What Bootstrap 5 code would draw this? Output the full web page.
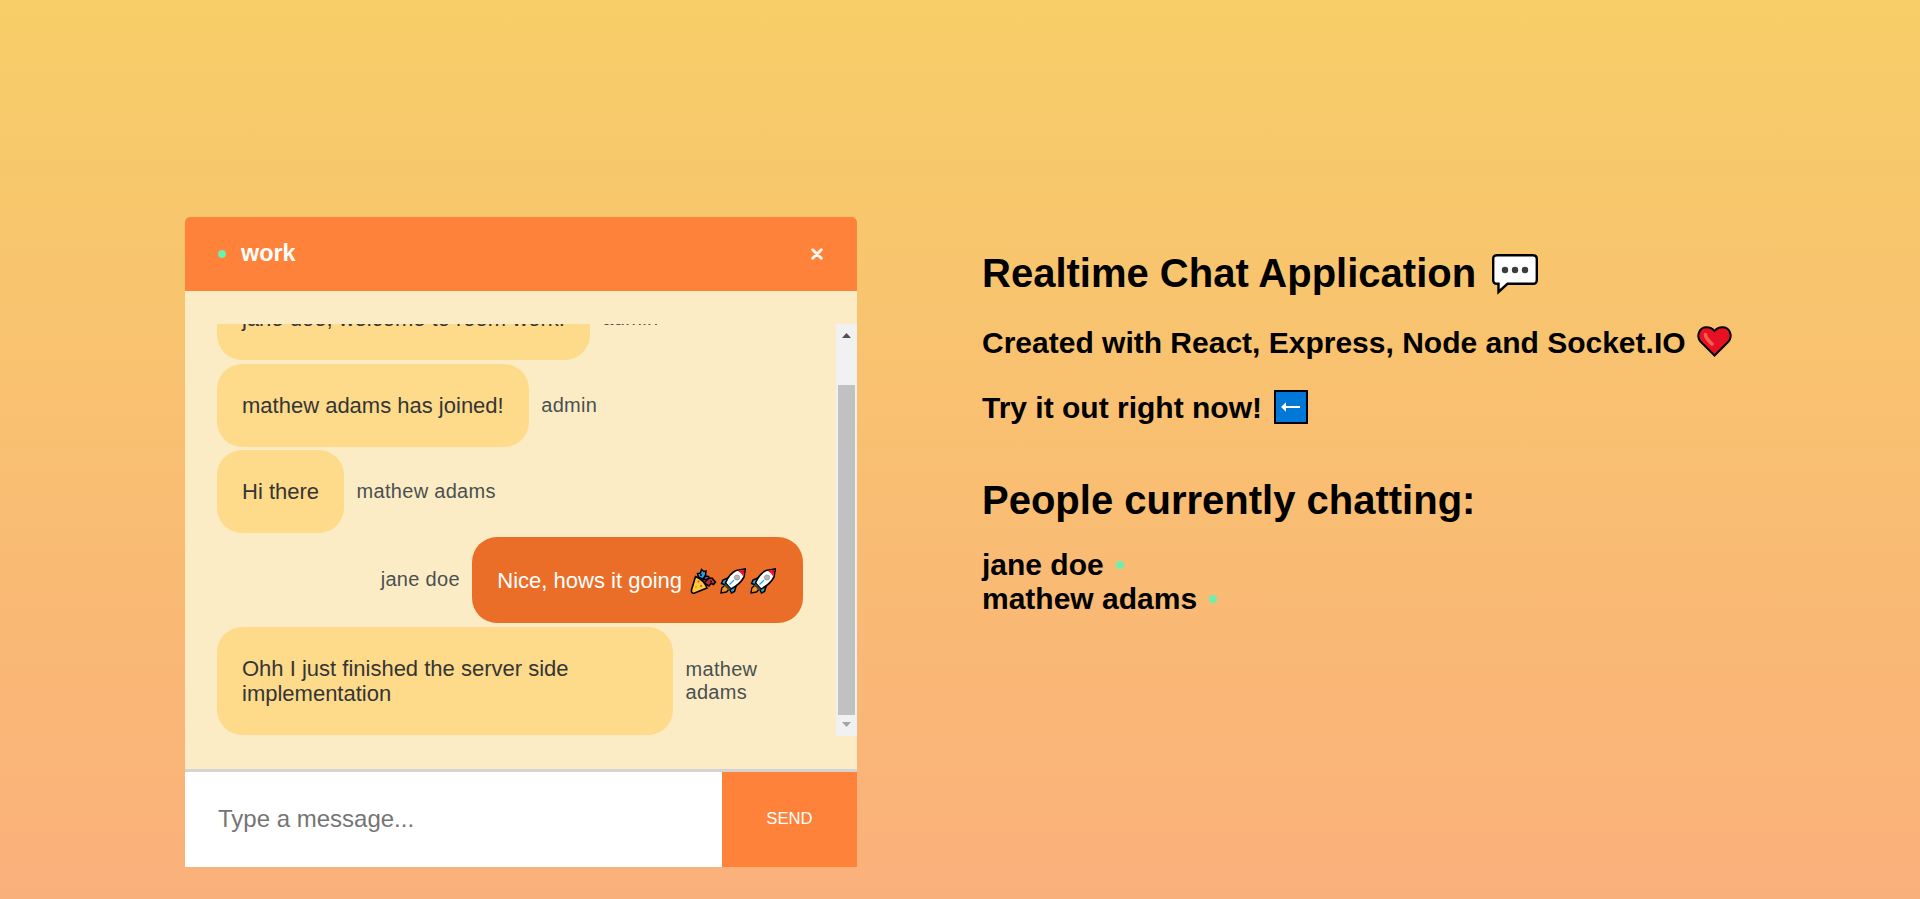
<!DOCTYPE html>
<html lang="en">
<head>
<meta charset="utf-8">
<meta name="viewport" content="width=device-width, initial-scale=1">
<title>Realtime Chat Application</title>
<link href="https://cdn.jsdelivr.net/npm/bootstrap@5.3.0/dist/css/bootstrap.min.css" rel="stylesheet">
<style>
  body { font-family: "Liberation Sans", Arial, sans-serif; color: #000; background: linear-gradient(180deg, #f7ce68 0, #fbab7e 1050px) no-repeat; line-height: 1.15; }
  .page { padding: 217px 185px 32px; gap: 125px; }
  .chat-box { width: 672px; height: 650px; background: #fcecc5; border-radius: 5px 5px 0 0; }
  .chat-head { height: 74px; padding: 0 34px 0 33px; background: #ff823a; border-radius: 5px 5px 0 0; }
  .room { font-size: 23.4px; font-weight: 700; line-height: 28px; margin-left: 15px; padding-bottom: 2px; color: #fff; }
  .dot { width: 8px; height: 8px; border-radius: 50%; background: #70eeac; flex: none; }
  .chat-head .dot { margin-bottom: 1px; }
  .people-dot { margin-left: 12px; }
  .feed-area { padding: 33px 0; height: 478px; }
  .feed { height: 412px; }
  .msgs { width: 651px; padding: 0 33px 1px 32px; }
  .bubble { background: #fddb8a; color: #353535; border-radius: 25px; padding: 28.8px 25px 28.7px; font-size: 22px; line-height: 25.3px; max-width: 456px; flex: none; }
  .bubble.mine { background: #ea6e28; color: #fff; padding: 31.3px 27px 29.1px 25px; white-space: nowrap; max-width: none; }
  .sender { font-size: 20px; line-height: 23px; letter-spacing: .3px; color: #4a5050; padding: .5px 12.5px 0; }
  .gap-after { margin-bottom: 3px; }
  .track { width: 21px; background: #f1f1f1; }
  .thumb { width: 17px; height: 330px; background: #c1c1c1; }
  .compose { height: 98px; border-top: 3px solid #d3d3d3; }
  .compose input { border: 0; border-radius: 0; font-size: 24px; padding: 0 33px 2px; color: #333; min-width: 0; }
  .compose input::placeholder { color: #757575; }
  .send { width: 135px; border-radius: 0; background: #ff823a; color: #fff; font-size: 16.67px; padding-bottom: 3px; }
  .info { padding-top: 33px; }
  .info h1 { font-size: 40px; font-weight: 700; line-height: 46px; }
  .info h2 { font-size: 30px; font-weight: 700; line-height: 34px; }
  .emo { flex: none; overflow: visible; }
</style>
</head>
<body>
<svg class="d-none" xmlns="http://www.w3.org/2000/svg">
  <symbol id="rocket" viewBox="0 0 26 26">
    <path d="M9 9.500L3 12 1.500 15.500 6 17M16.500 17L14.500 23.500 11.500 25 9 20" fill="#23a9ea" stroke="#000" stroke-width="1.500"/>
    <path d="M5 17L1.800 20 1 25 6.500 24 9 21Z" fill="#f7941d" stroke="#000" stroke-width="1.400"/>
    <path d="M5.500 15Q9 6 16 2.500L25.300 1 24 9Q20 16.500 11 21Z" fill="#fff" stroke="#000" stroke-width="1.600"/>
    <path d="M17.500 2.700L24.500 1.700 23.300 8.500Q21.500 4.500 17.500 2.700Z" fill="#e81123"/>
    <path d="M5.500 15.500L10.700 20.700 9 22.500 4 17.500Z" fill="#444"/>
    <path d="M9.500 16.500L14 12" stroke="#23a9ea" stroke-width="1.300"/>
    <circle cx="17" cy="9.500" r="2.600" fill="#b8b8b8" stroke="#888" stroke-width=".7"/>
  </symbol>
</svg>
<main class="page d-flex align-items-start">
  <section class="chat-box d-flex flex-column">
    <header class="chat-head d-flex align-items-center">
      <span class="dot"></span>
      <span class="room">work</span>
      <svg class="ms-auto" width="12" height="12" viewBox="0 0 12 12" stroke="#fff" stroke-opacity=".92" stroke-width="2.900" stroke-linecap="round"><path d="M1.700 1.700L10.300 10.300M10.300 1.700L1.700 10.300"/></svg>
    </header>
    <div class="feed-area">
      <div class="feed d-flex">
        <div class="msgs h-100 overflow-hidden d-flex flex-column justify-content-end">
          <div class="d-flex flex-column flex-shrink-0">
            <div class="d-flex align-items-center mb-1"><div class="bubble">jane doe, welcome to room work.</div><div class="sender">admin</div></div>
            <div class="d-flex align-items-center gap-after"><div class="bubble">mathew adams has joined!</div><div class="sender">admin</div></div>
            <div class="d-flex align-items-center mb-1"><div class="bubble">Hi there</div><div class="sender">mathew adams</div></div>
            <div class="d-flex align-items-center justify-content-end mb-1"><div class="sender">jane doe</div>
              <div class="bubble mine d-flex align-items-center">Nice, hows it going
                <svg class="emo ms-2" width="26" height="26" viewBox="0 0 26 26" stroke="#000">
                  <path d="M8.500 9L7.500 5.500 10.500 5 11.500 1.500 14 3.500 16 3 15.500 8 12.500 11Z" fill="#2b9fe6" stroke-width="1.500"/>
                  <path d="M13.500 12L15 8 18.500 8.500 20 11Z" fill="#6a4fa8" stroke-width="1.400"/>
                  <path d="M14.500 14.500L18.500 10.500 22 10 25.500 14 23.500 16.500 21 15.500 19 18 16.500 16.500Z" fill="#c42b35" stroke-width="1.500"/>
                  <path d="M5.500 8.500Q14 12 17 20L4 25.200Q1 25.500 1.500 22Z" fill="#ffc83d" stroke-width="1.600"/>
                  <g stroke="none"><circle cx="8.500" cy="13.500" r="1" fill="#e8483d"/><circle cx="11" cy="18" r="1" fill="#e8483d"/><circle cx="6" cy="19" r="1" fill="#f7941d"/><circle cx="11" cy="7" r="1" fill="#000"/><circle cx="21" cy="13.500" r=".9" fill="#000"/></g>
                </svg>
                <svg class="emo ms-1" width="26" height="26"><use href="#rocket"/></svg>
                <svg class="emo ms-1" width="26" height="26"><use href="#rocket"/></svg>
              </div></div>
            <div class="d-flex align-items-center"><div class="bubble">Ohh I just finished the server side implementation</div><div class="sender">mathew adams</div></div>
          </div>
        </div>
        <div class="track d-flex flex-column align-items-center justify-content-between">
          <svg width="9" height="5" viewBox="0 0 9 5" style="margin-top:9px"><path d="M0 5L4.500 0 9 5Z" fill="#505050"/></svg>
          <div class="thumb mt-auto"></div>
          <svg width="9" height="5" viewBox="0 0 9 5" style="margin:7px 0 9px"><path d="M0 0L4.500 5 9 0Z" fill="#a3a3a3"/></svg>
        </div>
      </div>
    </div>
    <form class="compose d-flex">
      <input class="flex-grow-1 bg-white" type="text" placeholder="Type a message...">
      <button class="send border-0" type="button">SEND</button>
    </form>
  </section>
  <section class="info">
    <h1 class="d-flex mb-0">Realtime Chat Application
      <svg class="emo" style="margin:4px 0 0 16px" width="46" height="41" viewBox="0 0 46 41"><path d="M5 1.200H41Q44.800 1.200 44.800 5V26Q44.800 29.800 41 29.800H15.500L6.500 38V29.800H5Q1.200 29.800 1.200 26V5Q1.200 1.200 5 1.200Z" fill="#fff" stroke="#000" stroke-width="2.400"/><g fill="#3b3b3b"><circle cx="13" cy="16" r="3.200"/><circle cx="23" cy="16" r="3.200"/><circle cx="33" cy="16" r="3.200"/></g></svg>
    </h1>
    <h2 class="d-flex" style="margin:30px 0 31px">Created with React, Express, Node and Socket.IO
      <svg class="emo" style="margin:0 0 0 11px" width="35" height="31" viewBox="0 0 35 31"><path d="M17.500 29.500L3.500 15.500C-1 10 2 1.200 9.500 1.200Q14.500 1.200 17.500 5 20.500 1.200 25.500 1.200C33 1.200 36 10 31.500 15.500Z" fill="#e81123" stroke="#000" stroke-width="2"/><path d="M8.500 8.500Q8.500 12 15 18" fill="none" stroke="#f1604f" stroke-width="3.600" stroke-linecap="round"/></svg>
    </h2>
    <h2 class="d-flex" style="margin:0 0 52px">Try it out right now!
      <svg class="emo" style="margin:-1px 0 0 12px" width="34" height="34" viewBox="0 0 34 34"><path d="M1 1H33V33H1Z" fill="#0078d7" stroke="#000" stroke-width="2"/><path d="M7 17L12 12.300V15.900H26V18.100H12V21.700Z" fill="#fff"/></svg>
    </h2>
    <h1 style="margin:0 0 25px">People currently chatting:</h1>
    <h2 class="d-flex align-items-center mb-0">jane doe<span class="dot people-dot"></span></h2>
    <h2 class="d-flex align-items-center mb-0">mathew adams<span class="dot people-dot"></span></h2>
  </section>
</main>
<script src="https://cdn.jsdelivr.net/npm/bootstrap@5.3.0/dist/js/bootstrap.bundle.min.js"></script>
</body>
</html>
